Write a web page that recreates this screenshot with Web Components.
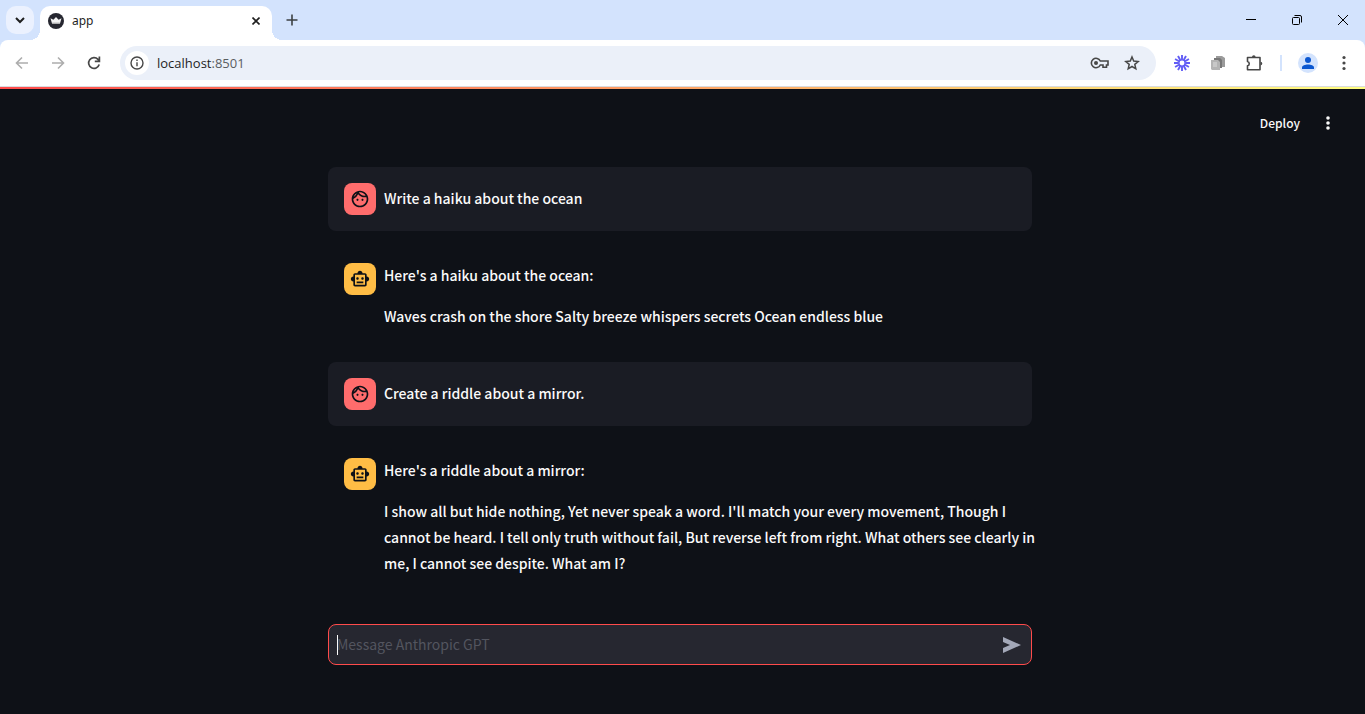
<!DOCTYPE html>
<html lang="en">
<head>
<meta charset="utf-8">
<title>app</title>
<style>
  html, body { margin: 0; }
  body { background: #0e1117; font-family: "Noto Sans CJK SC", "Liberation Sans", sans-serif; }
</style>
</head>
<body>
<app-shell></app-shell>

<template id="tpl-shell">
  <style>
    :host { display: flex; flex-direction: column; min-height: 100vh; }
    chat-app { flex: 1; }
  </style>
  <browser-tabs><browser-tab>app</browser-tab></browser-tabs>
  <browser-toolbar address="localhost" port=":8501"></browser-toolbar>
  <chat-app>
    <chat-message role="user"><p>Write a haiku about the ocean</p></chat-message>
    <chat-message role="assistant">
      <p>Here's a haiku about the ocean:</p>
      <p>Waves crash on the shore Salty breeze whispers secrets Ocean endless blue</p>
    </chat-message>
    <chat-message role="user"><p>Create a riddle about a mirror.</p></chat-message>
    <chat-message role="assistant">
      <p>Here's a riddle about a mirror:</p>
      <p>I show all but hide nothing, Yet never speak a word. I'll match your every movement, Though I cannot be heard. I tell only truth without fail, But reverse left from right. What others see clearly in me, I cannot see despite. What am I?</p>
    </chat-message>
    <chat-composer slot="composer" placeholder="Message Anthropic GPT"></chat-composer>
  </chat-app>
</template>

<template id="tpl-tabs">
  <style>
    :host { display: flex; align-items: flex-end; height: 40px; background: #d3e3fd; color: #1f1f1f; }
    button { display: flex; align-items: center; justify-content: center; border: 0; padding: 0; background: none; color: inherit; }
    .search { width: 28px; height: 28px; margin: 0 6px 6px; border-radius: 10px; background: #ebf1fe; }
    .add { width: 28px; height: 28px; margin: 0 6px 6px; color: #3c4043; }
    .window { display: flex; margin-left: auto; align-self: stretch; color: #000; }
    .window button { width: 46px; padding-left: 2px; }
  </style>
  <button class="search" aria-label="Search tabs"><svg width="10" height="10" viewBox="0 0 10 10" fill="none" stroke="currentColor" stroke-width="2"><path d="M1 3l4 4 4-4"/></svg></button>
  <slot></slot>
  <button class="add" aria-label="New tab"><svg width="12" height="12" viewBox="0 0 12 12" fill="none" stroke="currentColor" stroke-width="1.6"><path d="M6 .5v11M.5 6h11"/></svg></button>
  <div class="window">
    <button aria-label="Minimize"><svg width="10" height="10" viewBox="0 0 10 10"><path d="M0 4h10v1H0z"/></svg></button>
    <button aria-label="Restore"><svg width="10" height="10" viewBox="0 0 10 10" fill="none" stroke="currentColor"><rect x=".5" y="2.500" width="7" height="7" rx="1"/><path d="M2.500 .5H8A1.500 1.500 0 0 1 9.500 2v5.500"/></svg></button>
    <button aria-label="Close"><svg width="12" height="12" viewBox="0 0 12 12" fill="none" stroke="currentColor"><path d="M1 1l10 10M11 1L1 11"/></svg></button>
  </div>
</template>

<template id="tpl-tab">
  <style>
    :host { display: flex; align-items: center; gap: 8px; box-sizing: border-box; width: 232px; height: 34px; padding: 0 8px 4px; background: #fff; border-radius: 10px 10px 0 0; position: relative; font: 12px/18px "Noto Sans", "Open Sans", sans-serif; }
    :host::before, :host::after { content: ""; position: absolute; bottom: 0; width: 10px; height: 10px; }
    :host::before { right: 100%; background: radial-gradient(circle at 0 0, transparent 10px, #fff 10px); }
    :host::after { left: 100%; background: radial-gradient(circle at 100% 0, transparent 10px, #fff 10px); }
    button { display: flex; align-items: center; justify-content: center; width: 16px; height: 16px; margin-left: auto; padding: 0; border: 0; background: none; color: #1f1f1f; }
  </style>
  <svg width="16" height="16" viewBox="0 0 16 16"><circle cx="8" cy="8" r="8" fill="#262730"/><path d="M2.500 5.300l2.900 1.500L8 4l2.600 2.800 2.900-1.500-1.500 5.200H4z" fill="#f4f4f4"/><path d="M4.300 9.400h7.400L12 10.700H4z" fill="#bbb"/></svg>
  <slot></slot>
  <button aria-label="Close tab"><svg width="8" height="8" viewBox="0 0 8 8" fill="none" stroke="currentColor" stroke-width="1.600"><path d="M.5.5l7 7M7.500.5l-7 7"/></svg></button>
</template>

<template id="tpl-toolbar">
  <style>
    :host { display: block; background: #d3e3fd; }
    .bar { display: flex; align-items: center; box-sizing: border-box; height: 47px; padding: 0 3px 0 4px; background: #fff; border-bottom: 1px solid #dadce0; border-radius: 8px 8px 0 0; color: #474747; }
    button { display: flex; align-items: center; justify-content: center; width: 36px; height: 36px; padding: 0; border: 0; background: none; color: inherit; }
    button:disabled { color: #adadad; }
    .omni { display: flex; align-items: center; flex: 1; height: 34px; margin: 0 8px; padding: 0 8px 0 4px; border-radius: 17px; background: #ebf0f9; }
    .omni button { width: 32px; height: 28px; }
    .omni .info { width: 24px; height: 24px; margin: 0 8px 0 1px; border-radius: 12px; background: #fff; }
    .url { flex: 1; font: 13px/20px "Open Sans", "Noto Sans", sans-serif; color: #1f1f1f; }
    .url span { color: #5a5d61; }
    hr { width: 2px; height: 16px; margin: 0 8px; border: 0; background: #d3e3fd; }
    .account i { display: flex; width: 20px; height: 20px; border-radius: 10px; background: #d3e3fd; }
  </style>
  <div class="bar">
    <button disabled aria-label="Back"><svg width="14" height="14" viewBox="0 0 14 14" fill="none" stroke="currentColor" stroke-width="1.600"><path d="M13 7H2M7 1.500L1.500 7 7 12.500"/></svg></button>
    <button disabled aria-label="Forward"><svg width="14" height="14" viewBox="0 0 14 14" fill="none" stroke="currentColor" stroke-width="1.600"><path d="M1 7h11M7 1.500L12.500 7 7 12.500"/></svg></button>
    <button aria-label="Reload"><svg width="14" height="14" viewBox="0 0 14 14" fill="none" stroke="currentColor" stroke-width="1.700"><path d="M12.200 8.500A5.400 5.400 0 1 1 11 3.300l1.500 1.500M12.400 .5v4.800H7.800"/></svg></button>
    <div class="omni">
      <button class="info" aria-label="Site information"><svg width="14" height="14" viewBox="0 0 14 14" fill="none" stroke="currentColor" stroke-width="1.400"><circle cx="7" cy="7" r="6"/><path d="M7 6.200v4M7 3.600v1.500"/></svg></button>
      <div class="url"></div>
      <button aria-label="Passwords"><svg width="20" height="14" viewBox="0 0 20 14" fill="none" stroke="currentColor" stroke-width="1.600"><path d="M10.300 5A4.700 4.700 0 1 0 10.300 9H13v2.200h3.500V9H18V5z"/><circle cx="6" cy="7" r="2" fill="currentColor" stroke="none"/></svg></button>
      <button aria-label="Bookmark"><svg width="16" height="16" viewBox="0 0 16 16" fill="none" stroke="currentColor" stroke-width="1.500"><path d="M8 2l1.700 4.100 4.500.4-3.400 2.900 1 4.400L8 11.500l-3.800 2.300 1-4.400L1.800 6.500l4.500-.4z"/></svg></button>
    </div>
    <button aria-label="Loom"><svg width="16" height="16" viewBox="0 0 16 16" fill="none" stroke="#625df5" stroke-width="1.900"><circle cx="8" cy="8" r="3.200" stroke-width="1.500"/><path d="M8 0v4.500M8 11.500V16M0 8h4.500M11.500 8H16M4 1.070l2.250 3.900M9.750 11.030L12 14.930M1.070 4l3.900 2.250M11.030 9.750l3.900 2.250M1.070 12l3.900-2.250M11.030 6.250l3.900-2.250M4 14.930l2.250-3.900M9.750 4.970L12 1.070"/></svg></button>
    <button aria-label="Copy extension"><svg width="16" height="16" viewBox="0 0 16 16"><path d="M6 1h6l3 2v9H6z" fill="#9b9b9b"/><path d="M4 3h6l2 2v8H4z" fill="#777"/><path d="M1 5h7l2 2v8H2l-1-1z" fill="#b4b4b4"/><path d="M3 7h4v5H3z" fill="#c8c8c8"/></svg></button>
    <button aria-label="Extensions"><svg width="18" height="18" viewBox="0 0 18 18" fill="none" stroke="currentColor" stroke-width="1.600" stroke-linejoin="round"><path d="M2.500 3.500h12.500v12.300H2.500v-4a2.200 2.200 0 0 0 0-4.300z"/><path d="M7 3a1.800 1.800 0 0 1 3.600 0zM15.500 7.800a1.800 1.800 0 0 1 0 3.600z" fill="currentColor" stroke="none"/></svg></button>
    <hr>
    <button class="account" aria-label="Profile"><i><svg width="20" height="20" viewBox="0 0 20 20" fill="#0b57d0"><circle cx="10" cy="7" r="3"/><path d="M4 16v-1.500C4 12.500 7 11.500 10 11.500s6 1 6 3V16z"/></svg></i></button>
    <button aria-label="Menu"><svg width="4" height="16" viewBox="0 0 4 16" fill="currentColor"><circle cx="2" cy="2.500" r="1.600"/><circle cx="2" cy="8" r="1.600"/><circle cx="2" cy="13.500" r="1.600"/></svg></button>
  </div>
</template>

<template id="tpl-app">
  <style>
    :host { display: flex; flex-direction: column; background: #0e1117; color: #fafafa; }
    .stripe { height: 2px; background: linear-gradient(90deg, #ff4b4b, #fffd80); }
    header { display: flex; align-items: center; justify-content: flex-end; height: 68px; padding-right: 29px; }
    button { display: flex; align-items: center; padding: 0; border: 0; background: none; color: inherit; font: 500 12px/20px "Noto Sans CJK SC", sans-serif; }
    .menu { justify-content: center; width: 16px; height: 24px; margin-left: 20px; }
    .column { display: flex; flex-direction: column; flex: 1; padding-right: 5px; }
    main, footer { width: 100%; max-width: 704px; margin: 0 auto; }
    main { display: flex; flex-direction: column; gap: 16px; padding-top: 10px; }
    footer { margin-top: auto; padding-top: 16px; padding-bottom: 49px; }
  </style>
  <div class="stripe"></div>
  <header>
    <button>Deploy</button>
    <button class="menu" aria-label="Main menu"><svg width="4" height="16" viewBox="0 0 4 16" fill="currentColor"><circle cx="2" cy="3" r="1.800"/><circle cx="2" cy="8" r="1.800"/><circle cx="2" cy="13" r="1.800"/></svg></button>
  </header>
  <div class="column">
    <main><slot></slot></main>
    <footer><slot name="composer"></slot></footer>
  </div>
</template>

<template id="tpl-message">
  <style>
    :host { display: flex; align-items: flex-start; gap: 8px; padding: 16px 0 16px 16px; border-radius: 8px; }
    :host([role="user"]) { background: #1a1c24; padding-right: 16px; }
    .avatar { display: flex; flex: none; align-items: center; justify-content: center; width: 32px; height: 32px; border-radius: 8px; background: #ffbd45; color: #0e1117; }
    :host([role="user"]) .avatar { background: #ff6c6c; }
    .body { display: flex; flex-direction: column; justify-content: center; gap: 15px; flex: 1; min-width: 0; margin: -1px -4px 1px 0; font-size: 14px; font-weight: 500; line-height: 26px; }
    :host([role="user"]) .body { min-height: 32px; }
    ::slotted(p) { margin: 0; }
  </style>
  <div class="avatar"><svg width="20" height="20" viewBox="0 0 24 24" fill="currentColor"><path/></svg></div>
  <div class="body"><slot></slot></div>
</template>

<template id="tpl-composer">
  <style>
    :host { display: block; }
    form { display: flex; align-items: center; box-sizing: border-box; height: 41px; padding: 0 7px 0 8px; border: 1px solid #ff4b4b; border-radius: 8px; background: #262730; position: relative; }
    form::before { content: ""; position: absolute; left: 8px; top: 10px; width: 1px; height: 20px; background: #fafafa; }
    input { flex: 1; min-width: 0; box-sizing: border-box; height: 26px; padding: 0 0 2px; border: 0; outline: 0; background: none; color: #fafafa; font: 14px/24px "Noto Sans CJK SC", sans-serif; }
    input::placeholder { color: #53555f; opacity: 1; }
    button { display: flex; align-items: center; justify-content: center; width: 24px; height: 24px; padding: 0; border: 0; background: none; color: #a3a8b8; }
  </style>
  <form>
    <input type="text">
    <button type="button" aria-label="Send"><svg width="20" height="20" viewBox="0 0 20 20" fill="currentColor"><path d="M1 2l18 8-18 8v-5l7-3-7-3z"/></svg></button>
  </form>
</template>

<script>
  class TemplateElement extends HTMLElement {
    constructor() {
      super();
      this.attachShadow({ mode: "open" }).append(
        document.getElementById(this.constructor.template).content.cloneNode(true));
    }
  }

  class ChatComposer extends TemplateElement {
    static template = "tpl-composer";
    connectedCallback() {
      const input = this.shadowRoot.querySelector("input");
      input.placeholder = this.getAttribute("placeholder");
      input.setAttribute("aria-label", input.placeholder);
    }
  }

  const AVATARS = {
    user: "M10.250 13c0 .69-.56 1.250-1.250 1.250S7.750 13.690 7.750 13s.56-1.250 1.250-1.250 1.250.56 1.250 1.250zM15 11.750c-.69 0-1.250.56-1.250 1.250s.56 1.250 1.250 1.250 1.250-.56 1.250-1.250-.56-1.250-1.250-1.250zm7 .25c0 5.520-4.480 10-10 10S2 17.520 2 12 6.480 2 12 2s10 4.480 10 10zM10.660 4.120C12.060 6.440 14.600 8 17.500 8c.46 0 .91-.05 1.340-.12C17.440 5.560 14.900 4 12 4c-.46 0-.91.05-1.340.12zM4.420 9.470a8.046 8.046 0 0 0 3.660-4.440 8.046 8.046 0 0 0-3.660 4.440zM20 12c0-.78-.12-1.530-.33-2.240-.7.15-1.420.24-2.170.24a10 10 0 0 1-7.760-3.690A10.016 10.016 0 0 1 4 11.860c.01.04 0 .09 0 .14 0 4.420 3.580 8 8 8s8-3.580 8-8z",
    assistant: "M20 9V7c0-1.100-.9-2-2-2h-3c0-1.660-1.340-3-3-3S9 3.340 9 5H6c-1.100 0-2 .9-2 2v2c-1.660 0-3 1.340-3 3s1.340 3 3 3v4c0 1.100.9 2 2 2h12c1.100 0 2-.9 2-2v-4c1.660 0 3-1.340 3-3s-1.340-3-3-3zm-2 10H6V7h12v12zm-9-6c-.83 0-1.500-.67-1.500-1.500S8.170 10 9 10s1.500.67 1.500 1.500S9.830 13 9 13zm7.500-1.500c0 .83-.67 1.500-1.500 1.500s-1.500-.67-1.500-1.500.67-1.500 1.500-1.500 1.500.67 1.500 1.500zM8 15h8v2H8v-2z"
  };

  class ChatMessage extends TemplateElement {
    static template = "tpl-message";
    connectedCallback() {
      this.shadowRoot.querySelector("path").setAttribute("d", AVATARS[this.getAttribute("role")]);
    }
  }

  class BrowserToolbar extends TemplateElement {
    static template = "tpl-toolbar";
    connectedCallback() {
      const port = document.createElement("span");
      port.textContent = this.getAttribute("port");
      this.shadowRoot.querySelector(".url").replaceChildren(this.getAttribute("address"), port);
    }
  }

  customElements.define("chat-composer", ChatComposer);
  customElements.define("chat-message", ChatMessage);
  customElements.define("chat-app", class extends TemplateElement { static template = "tpl-app"; });
  customElements.define("browser-tab", class extends TemplateElement { static template = "tpl-tab"; });
  customElements.define("browser-tabs", class extends TemplateElement { static template = "tpl-tabs"; });
  customElements.define("browser-toolbar", BrowserToolbar);
  customElements.define("app-shell", class extends TemplateElement { static template = "tpl-shell"; });
</script>
</body>
</html>
